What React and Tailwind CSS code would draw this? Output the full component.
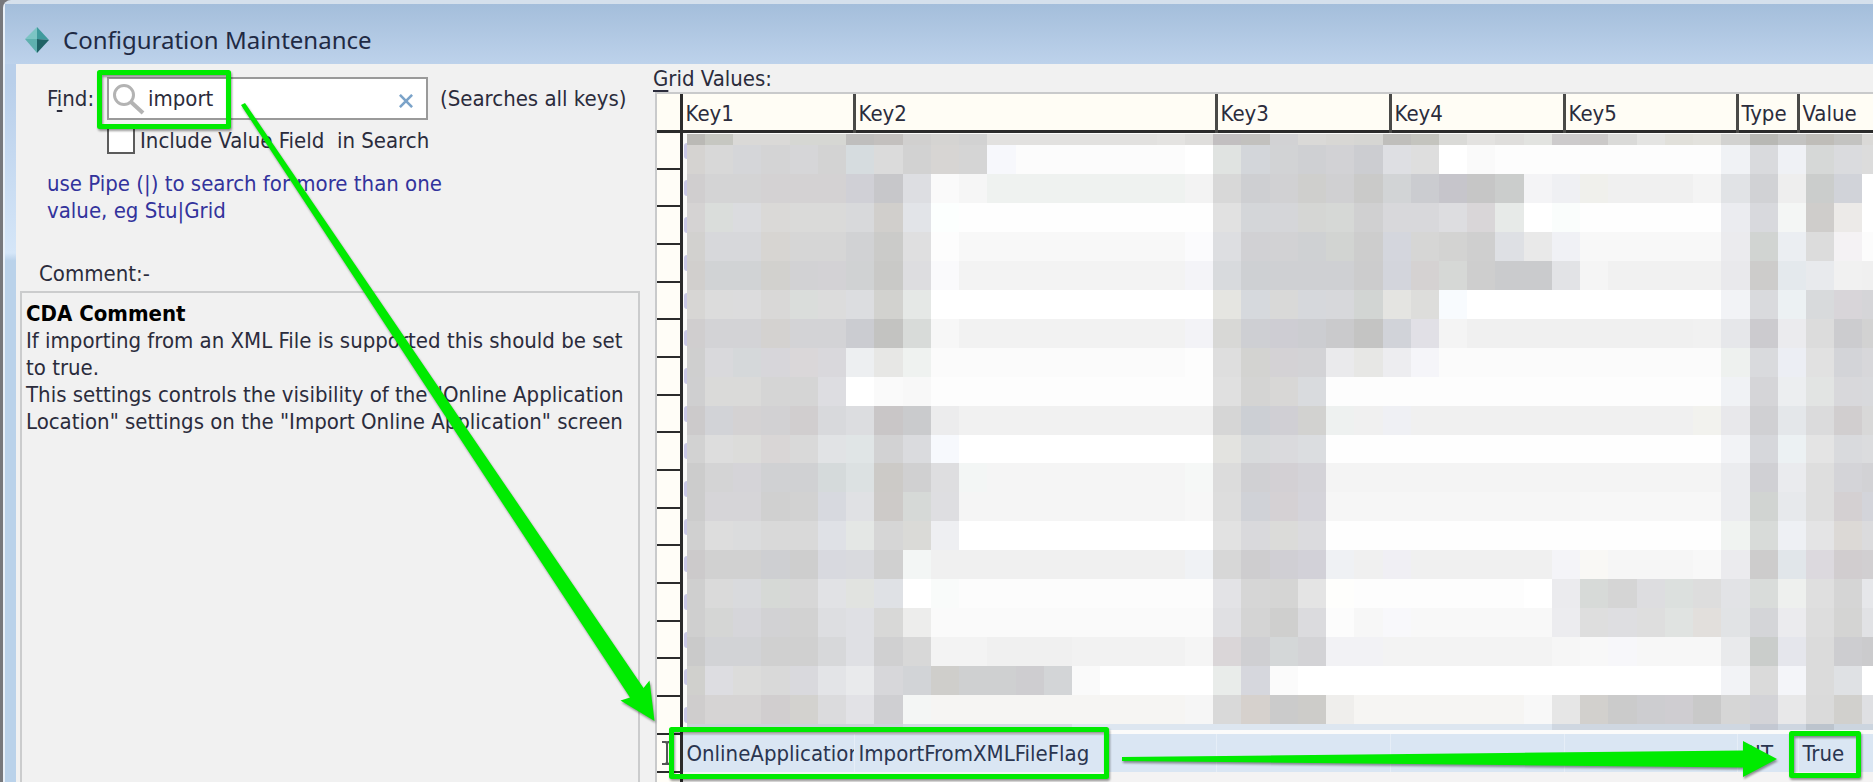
const rowsOfCells = [
  'bab9b5 c6c7c1 dad9d7*2 d6d7d3*2 bfbebd c3c0be d1d0cf d5d4d2 d2d2d2 e2e1df*6 e4e3e1 dfdedc c2bfc0 c2c1be d2d2d4 dad9d7 d8d7d4 d6d6d3 bfbebb c4c4be dadad7 e3e2e0 dfdedc e2e3e0 cdcbcc cbc9c8 dadad8 e4e4e2 e1e0da e3e2dd d2d2d0 b8b8b4 c3c3c1 bfbdb8 c3c3c1 dad9d7',
  'd5d3d1 d8d8d8 d5d6d9 d4d4d5 d6d6d8 d3d3d3 d6dcdf dbdbdb d2d2d2 d7d5d3 d5d5d5 f7f8fc fcfcfc*6 ffffff e0e3e1 d3d6da d2d3d5 cfd0d3 d2d2d5 cccdd1 dedfe3 dedede ffffff fafafa fdfdfd*8 f0f2f5 d9dadd eff1f5 d6d8d7 dadbde dcdcdc',
  'd0cecf d4d4d5*2 d4d2d3*3 d0d0d6 c7c7ca dddee2 fafafa f6f6f6 eff2f0*7 f3f3f3 d8d8d8 cecfd2 d1d1d3 cfcfcd d0d0d2 cacac9 d2d4d6 cbccd0 c6c5cb c6c6c6 cbcdcc f4f4f6 eff0f3 f0f0ec f0f0f0*3 f4f4f4 e1e3e6 d1d2d5 eeeeee cbcdcc d1d3d9 ffffff',
  'd5d3d3 dadddb dbdcdf dad9d7 dadad9*2 d8d9db d1cfcc e2e4e8 fcfffe fefefe*9 e1e1e1 d4d6d9 d5d6d9 d5d6d4 d6d8d6 d0d0d1 d8d8db*2 dddde0 d9d6d8 e7eae8 ffffff fafdfc fefefe*5 ebecf0 d8d9dd f4f6f5 cfcdcb eceae8 ffffff',
  'd2d1cf d7d8db*2 d7d5d2 d6d6d6*2 d1d2d4 cbcbc9 dfdfe0 fdfdfd f8f8f8*8 fbfbfd dddee1 d1d1d4 d2d2d4 cfd1d3 d2d4d2 cdcdcd d4d6dd d6d6d5 d3d3d2 cfcfcf dee0e4 e9e9e9 f0f1f5 f8f8f8*5 ebebee d1d4d2 ebeef2 dcdcdc f4f2f4 fcfcfc',
  'd1cfcd d1d3d5*2 d2d1ce d2d2d4 d3d2d5 d0d2d3 c9c9c7 dddde0 fafafc f3f3f3*8 f4f4f8 d8dadd ced0d3 cfd0d3*3 cccccd d3d5dc d5d2d2 d6d8d6 cecece cacbcd*2 e2e3e6 f5f5f5 f1f1f1*4 e9e9ec cdcccb e4e9ed e8eaed f1f1f1 f0f0f0',
  'd7d6d4 dcdcdc dcdcdd d9d8d7 dadddb dcdcdc dcdde0 d2d2cf e5e8e6 ffffff*10 e5e5e1 d6d9dd d9d9d8 d6d8dc d7d8db d2d5d3 e4e4e1 dddddb f8fbfe ffffff*9 f2f3f6 d9dadd ecf1f3 d8dadc d8d5d9 d5d5d8',
  'd0cecf d3d3d6*2 d4d2d0 d3d3d6*2 cbccd1 c3c3c1 d8dbd9 f7f7f7 f2f2f2*8 f3f3f7 d8d8d6 cecfd3 cecdd3 cccdd1 cacacc c4c4c3 d1d3d9 e1e0e6 f4f4f4 f0f0f0*8 f1f1f1 e6e7ea cccbcf ebebee dcdcdc cccccf d2d2d2',
  'cfcfcf d9d9dc d5d8da d7d6da dad7d9 d9d8dc edeff1 e7e7e5 eff2f0 fbfbfb*9 fdfdfd dedede d3d3d1 d4d2d5 d3d3d6 eaeaec e7e7e5 ededf0 f5f5f9 fbfbfb*10 eef1ef d9dadd eceef4 e1e1e1 d3d4d8 d7d7da',
  'cfcfd0 dadad9*2 d5d5d5*2 dddde1 ffffff fafafa f8f8f8 fdfdfd*10 e0e0e0 d4d4d3 d8d7d6 d9dbde fdfdfd*14 f0f2f5 d5d5d8 eceef0 e2e4e3 d8d8db d8d9dc',
  'cccacb d2d3d7 d4d2d3 d2d1d3 d1cecf d8d9dc dcdde0 c9c6c7 cacbcd ececed f1f1f1*9 d6d6d6 cccfd4 d0cfd4 d2d2d0 eef1f0 f0f0f0 eff0f4 f0f0f0*10 f2f2ee e8e8eb d0d0d3 e4e7ea dbdbdc d1cecf d8d8d8',
  'd2d2d2 dddddd dcdcda d9d6d6 d9d9d9 e1e3e5 e0e5e6 d2d2d3 dadbde f7f9fd ffffff*9 e3e3e0 d8dadc dadadd dbdde0 fefefe*14 f2f3f6 d6d7db ecf1f3 e4e4e4 d9dadd dbdcde',
  'cccccc d4d4d5 d5d4d8 d0d1d3*2 d5dadb dce1e2 cccac7 d0d0d1 dedee0 f3f6f5 f5f5f5*7 f6f8f7 dcdcdc d0d0d3 d3d0d4 d4d3d8 f4f4f4*14 ebecef d0d0d4 eaebee dedede d4d4d8 d2d2d5',
  'cccccc d6d5d8*2 d0d0d0 d2d2d2 d7d9df e0e1e4 cdcac8 d6d9d7 dedee1 f5f5f5*8 f7f7f7 dddddd d0d2d7 d5d1d4 d5d4da f6f6f6*9 f7f7f7*5 ebecef d1d4d2 e7e9ec dedede d4d0d2 d3d4da',
  'd0d0d0 dddddd dbdcdd d9d9d9*2 dfe1e6 e4e7e5 d6d6d6 dadad7 eeeff2 ffffff*9 e2e2e2 d9d9dc dbdbd9 dbdbde fefefe*14 f0f3f1 d8dbd9 eef0f4 e4e4e5 dcd9d6 dbdbdd',
  'cccacb d1d1d1*2 cecfd2 cecece d8d9df d9dade d0d0d0 f3f6f5 f0f0f0*9 f0f2f5 d7d7d7 cecdcf d0cfd4 d2d1d8 eff1f4 f0f0f0 f0eff4 f0f0f0*5 f4f4f8 f9f8f5 f6f6f6*3 f8f8f8 ebebee cdcccc e1e6ea dcd9de d1cdcf d1cfd1',
  'cfcfcf dadada d9dadd d6d9d6 d7d7d7 e1e2e5 e1e3e0 dfe1e5 ffffff f9fbfa fcfcfc*9 e3e3e6 d6d6d6 d5d5d4 e4e4e4 fefefc fdfdfd*6 ffffff ebebee d7dad8 d5d5d5 dddde0 dce0de dddddd e2e3e6 d9dcda eef0ee dfdfdf d5d5d5 e6e7ea',
  'cfcfcf d5d6d5 d6d6da d2d2d4 d2d2d2 dddee1 dfe0e4 d8d8d7 ededec fafafa*10 e0e0e3 d4d4d4 cfcfce dbdbde fcfcfc f7f7f7 f8f8fb f8f8f8*5 ececef dedede dedee1 dedede e0e3e1 e2dfdc e1e3e5 d4d5d8 ebebee dddddd d4d4d3 e1e2e5',
  'cacaca d2d3d6*2 d0d0d0*2 d7d8da dfe0e4 d0d0d1 d8d8d8 f3f3f3*2 f0f0f0*3 f2f2f2*4 f5f5f5 dad6d8 cfcfd2 d4d7d8 d3d3d6 f2f2f5*2 f3f3f3*6 f6f6f6 f8f8f8 f7f7fa f7f7f7*3 e9eaec cacdcb e5e6ec dbdbdb cdcdd0 cbcbcd',
  'd0d0cd dddde1 dcdcdb d9d9d9 d9d9dd e3e4e7 e9eaec d7d7da d2d4d7 cfcecb cfd0d1*2 cecdd0 d3d5d7 fafafa ffffff*4 e9ecea d6d7dd fbfbfb ffffff*15 f2f3f6 dadada f4f5f9 dbdbdb dfe1e4 ffffff',
  'cfcdcd d6d4d4*2 d1cecf d3d2cf dbdbdd e2e2e6 cfcfd2 f4f6f5 f6f5f3*9 f6f6f6 d9d9d9 d6d1cd cbcbcb cdccc9 efeeec f6f5f3*6 f8f8f8 e6e6e6 d2d0cd cbcbcb cdcdd0 cfcdd1 c9c9c9 d6d6d6 d3d3d7 e8e8e9 dadada d1d0cd dfe0e3',
  'ccd2da*8 d3dae4*6 dde6f0*17 cfd7e1*6 cfd7e1 c3c8d2 ced6e0 bcc4cd ccd5df*2',
];

const xs = [0, ...Array.from({ length: 42 }, (_, i) => Math.round(18 + i * 28.23)), 1186];
const ys = [0, ...Array.from({ length: 21 }, (_, i) => Math.round(11 + i * 28.95)), 596];

const expand = row =>
  row.split(' ').flatMap(token => {
    const [color, count] = token.split('*');
    return Array(Number(count || 1)).fill('#' + color);
  });

const Redaction = () => (
  <svg
    className="absolute top-[40px] left-[30px] h-[596px] w-[calc(100%-30px)]"
    viewBox="0 0 1186 596"
    preserveAspectRatio="none"
    shapeRendering="crispEdges"
    aria-hidden="true"
  >
    {rowsOfCells.map((row, r) =>
      expand(row).map((color, c) => (
        <rect
          key={`${r}-${c}`}
          x={xs[c]}
          y={ys[r]}
          width={xs[c + 1] - xs[c]}
          height={ys[r + 1] - ys[r]}
          fill={color}
        />
      ))
    )}
  </svg>
);

const columns = [
  { name: 'Key1', width: 'w-[173px]' },
  { name: 'Key2', width: 'w-[362px]' },
  { name: 'Key3', width: 'w-[174px]' },
  { name: 'Key4', width: 'w-[174px]' },
  { name: 'Key5', width: 'w-[173px]' },
  { name: 'Type', width: 'w-[61px]' },
  { name: 'Value', width: '' },
];

const selected = ['OnlineApplication', 'ImportFromXMLFileFlag', '', '', '', 'BIT', 'True'];

const GridValues = () => (
  <section className="flex min-w-0 flex-1 flex-col">
    <h2 id="grid-label" className="h-[29px] pt-px leading-[27px]">
      <span className="underline underline-offset-4">G</span>rid Values:
    </h2>
    <div className="relative ml-[2px] flex-1 border-t-2 border-l-2 border-[#c9cacb] bg-[#fbfbfa]">
      <table aria-labelledby="grid-label" className="w-full table-fixed border-collapse text-left">
        <thead>
          <tr className="h-[37px] border-b-3 border-[#2b2b2b] bg-[#fffdf5]">
            <th className="w-[24px] border-r-3 border-[#2b2b2b]" aria-label="Row" />
            {columns.map(col => (
              <th
                key={col.name}
                className={`${col.width} border-l-3 border-[#4a4a48] pt-[5px] pl-[3px] leading-6 font-normal`}
              >
                {col.name}
              </th>
            ))}
          </tr>
        </thead>
        <tbody>
          {Array.from({ length: 16 }, (_, i) => (
            <tr key={i} className={i % 3 === 1 ? 'h-[37px]' : 'h-[38px]'}>
              <td className="border-r-3 border-b-2 border-[#2b2b2b] bg-[#fffdf7]" />
              <td colSpan={7} className="pl-px">
                <span className="block h-4 w-[3px] rounded-l-full bg-[#c9c8e6]" />
              </td>
            </tr>
          ))}
          <tr className="h-[38px] bg-[#dae6f3] text-[#2a3550]">
            <td className="border-r-3 border-b-2 border-[#2b2b2b] bg-[#fffdf7]">
              <svg className="ml-1 h-6 w-3" viewBox="0 0 12 24" fill="none" stroke="#555" strokeWidth="2">
                <path d="M1 1h4l1 2 1-2h4M6 3v18M1 23h4l1-2 1 2h4" />
              </svg>
            </td>
            {selected.map((value, i) => (
              <td
                key={i}
                className="overflow-hidden border-l border-[#e6eef7] pt-[2px] pl-1 leading-6 whitespace-nowrap"
              >
                {value}
              </td>
            ))}
          </tr>
          <tr className="h-[38px] bg-[#f4f3f3]">
            <td className="border-r-3 border-[#2b2b2b] bg-[#fffdf7]" />
            <td colSpan={7} />
          </tr>
        </tbody>
      </table>
      <Redaction />
    </div>
  </section>
);

const SearchPanel = () => (
  <aside className="flex w-[637px] shrink-0 flex-col">
    <div className="flex items-center pt-[13px] pl-[31px]">
      <label htmlFor="find" className="w-[60px]">
        F<span className="underline underline-offset-4">i</span>nd:
      </label>
      <div className="flex h-[43px] w-[321px] items-center border-2 border-[#9a9a9a] bg-white pr-1 pl-[2px]">
        <svg className="h-9 w-9 shrink-0" viewBox="0 0 36 36" fill="none" stroke="#b3b3b3">
          <circle cx="13" cy="14" r="9.500" strokeWidth="3" />
          <path d="M20 21l12 11" strokeWidth="4" />
        </svg>
        <input id="find" type="text" defaultValue="import" className="ml-px min-w-0 flex-1 outline-none" />
        <button type="button" aria-label="Clear" className="flex h-8 w-8 items-center justify-center pt-1">
          <svg className="h-[14px] w-[14px]" viewBox="0 0 16 16" stroke="#7ba3c9" strokeWidth="3">
            <path d="M1 1l14 14M15 1L1 15" />
          </svg>
        </button>
      </div>
      <span className="ml-3">(Searches all keys)</span>
    </div>
    <div className="mt-[6px] flex items-center pl-[91px]">
      <input
        id="include"
        type="checkbox"
        className="h-7 w-7 appearance-none border-2 border-[#5c5c5c] bg-white"
      />
      <label htmlFor="include" className="ml-[5px] pt-px whitespace-pre">
        Include Value Field  in Search
      </label>
    </div>
    <p className="mt-4 pl-[31px] text-[#33339c]">
      use Pipe (|) to search for more than one
      <br />
      value, eg Stu|Grid
    </p>
    <h2 className="mt-9 pl-[23px]">Comment:-</h2>
    <div className="mt-1 mr-[13px] ml-1 flex-1 border-2 border-b-0 border-[#cbcccd] pt-[7px] pl-1 whitespace-nowrap">
      <h3 className="font-bold text-black">CDA Comment</h3>
      <p>
        If importing from an XML File is supported this should be set
        <br />
        to true.
        <br />
        This settings controls the visibility of the "Online Application
        <br />
        Location" settings on the "Import Online Application" screen
      </p>
    </div>
  </aside>
);

const Annotations = () => (
  <svg
    className="pointer-events-none absolute top-0 left-0 h-[782px] w-[1873px] drop-shadow-[1px_2px_1px_rgba(0,0,0,0.4)]"
    viewBox="0 0 1873 782"
    aria-hidden="true"
  >
    <g fill="none" stroke="#00eb00" strokeWidth="5" strokeLinejoin="round">
      <rect x="99.500" y="72.500" width="129" height="54" />
      <rect x="671.500" y="729.500" width="435" height="47" />
      <rect x="1791.500" y="733.500" width="67" height="42" />
    </g>
    <g fill="#00eb00">
      <path d="M241 105L245 103L643.500 688L649.500 680.500L654.500 721L620.500 700.500L630 697.500Z" />
      <path d="M1122 757L1743 750.500V741L1777 759L1743 777V767.500L1122 761Z" />
    </g>
  </svg>
);

const App = () => {
  return (
    <div className="relative flex h-screen overflow-hidden bg-[#77787c] pl-[3px] font-['DejaVu_Sans_Condensed','DejaVu_Sans',sans-serif] text-[22px] leading-[27px] text-[#2b2c3c]">
      <div className="flex min-w-0 flex-1 flex-col rounded-tl-lg border-t-4 border-l-2 border-t-[#d5e0ec] border-l-[#e9f1f9] bg-linear-to-b from-[#b9cfea] from-10% via-[#d5e6f8] via-32% to-[#bad2ea] to-33%">
        <header className="flex h-[60px] items-center gap-3 bg-linear-to-b from-[#a4bedb] to-[#bdd2eb] pt-[11px] pl-[18px]">
          <svg className="h-7 w-7" viewBox="0 0 28 28" aria-hidden="true">
            <path d="M14 1L2 13H14Z" fill="#7cc4c4" />
            <path d="M14 1V13L26 14Z" fill="#3f9a9c" />
            <path d="M2 13L14 27V13Z" fill="#5fb0ae" />
            <path d="M26 14L14 27V13Z" fill="#1f6265" />
          </svg>
          <h1 className="font-['Noto_Sans',sans-serif] text-[24px] text-[#1f2a44]">Configuration Maintenance</h1>
        </header>
        <main className="ml-[11px] flex min-h-0 flex-1 bg-[#f1f1f1]">
          <SearchPanel />
          <GridValues />
        </main>
      </div>
      <Annotations />
    </div>
  );
};

export default App;
